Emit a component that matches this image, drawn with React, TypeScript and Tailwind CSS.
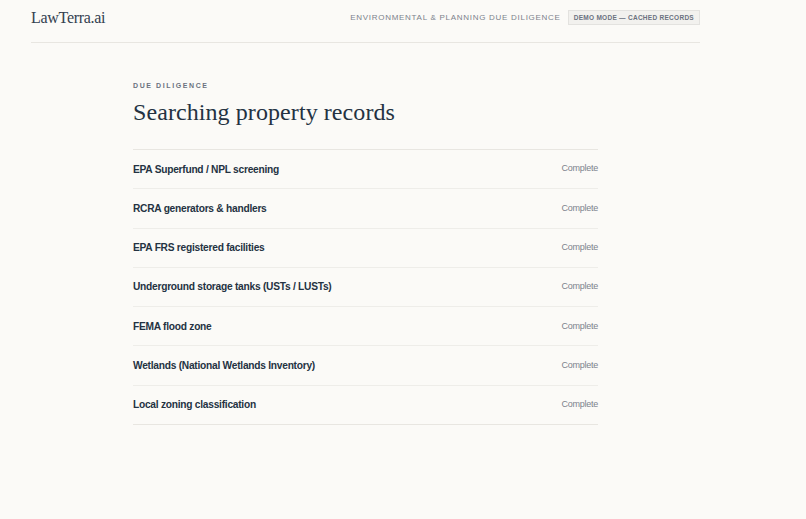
const checks = [
  "EPA Superfund / NPL screening",
  "RCRA generators & handlers",
  "EPA FRS registered facilities",
  "Underground storage tanks (USTs / LUSTs)",
  "FEMA flood zone",
  "Wetlands (National Wetlands Inventory)",
  "Local zoning classification",
];

export default function App() {
  return (
    <div className="min-h-[519px] bg-[#fbfaf7] font-['Liberation_Sans',Arial,sans-serif] overflow-hidden">
      <header className="ml-[31px] w-[669px] h-[43px] border-b border-[#e8e6e1] flex items-center justify-between pb-[7px]">
        <span className="font-['Liberation_Serif',serif] text-[16px] tracking-[-0.3px] text-[#33404f]">LawTerra.ai</span>
        <div className="flex items-center gap-[7px]">
          <span className="text-[8px] tracking-[0.72px] text-[#7b828c]">ENVIRONMENTAL &amp; PLANNING DUE DILIGENCE</span>
          <span className="h-[15px] px-[5px] flex items-center bg-[#f2f1ee] border border-[#e3e2df] text-[6.5px] font-bold tracking-[0.28px] text-[#6b7280]">
            DEMO MODE — CACHED RECORDS
          </span>
        </div>
      </header>
      <main className="ml-[133px] w-[465px] pt-[38px]">
        <div className="text-[7px] font-bold tracking-[1.6px] text-[#6b7280] leading-[10px]">DUE DILIGENCE</div>
        <h1 className="mt-[5px] font-['Liberation_Serif',serif] text-[24px] leading-[32px] tracking-[0.08px] text-[#243242]">Searching property records</h1>
        <ul className="mt-[21px] border-t border-[#e8e6e1]">
          {checks.map((name) => (
            <li key={name} className="h-[39.3px] border-b border-[#eeede9] last:border-[#e8e6e1] flex items-center justify-between">
              <span className="text-[10.2px] font-bold tracking-[-0.25px] text-[#243242]">{name}</span>
              <span className="text-[9px] tracking-[-0.25px] text-[#7b828c]">Complete</span>
            </li>
          ))}
        </ul>
      </main>
    </div>
  );
}
